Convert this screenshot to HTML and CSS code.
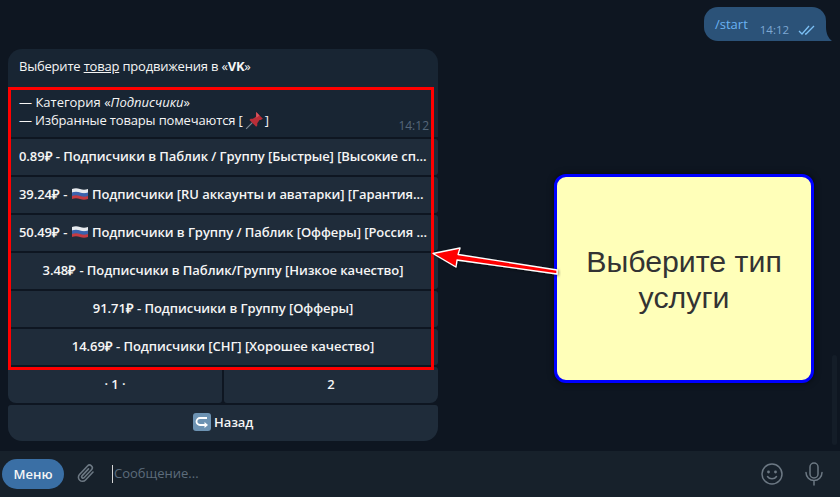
FILE: index.html
```html
<!DOCTYPE html>
<html lang="ru">
<head>
    <meta charset="UTF-8">
    <title>Telegram bot</title>
    <link rel="stylesheet" href="styles.css">
</head>
<body>
    <div class="app">
        <div class="chat">
            <div class="outgoing">
                <span class="cmd">/start</span>
                <span class="time">14:12</span>
                <svg class="checks" width="18" height="10" viewBox="0 0 18 10"><path d="M1 6l3 3 7-8M7 9l1 0 8-8" fill="none" stroke="#7cc0f5" stroke-width="1.300"/></svg>
                <svg class="tail" width="6" height="14" viewBox="0 0 6 14"><path d="M0 0C0 6 2 11 6 14H0Z" fill="#2b5278"/></svg>
            </div>
            <div class="incoming">
                <div class="message">
                    <p class="lead">Выберите <u>товар</u> продвижения в «<b>VK</b>»</p>
                    <p>— Категория «<i>Подписчики</i>»</p>
                    <p class="fav">— Избранные товары помечаются [<svg class="pin" width="19" height="19" viewBox="0 0 17 17"><path d="M1 16l6-6" stroke="#7d8a94" stroke-width="1"/><path d="M10 1l6 6-2 1-1 0-2 3 0 2-1 1-6-6 1-1 2 0 3-2 0-1z" fill="#b92e38"/><path d="M10 1l3 3-3 2z" fill="#d9555e"/></svg>]</p>
                    <span class="msg-time">14:12</span>
                </div>
                <div class="keyboard">
                    <div class="row"><button class="key key-left">0.89₽ - Подписчики в Паблик / Группу [Быстрые] [Высокие сп...</button></div>
                    <div class="row"><button class="key key-left">39.24₽ -
                        <svg class="flag" width="16" height="12" viewBox="0 0 16 12"><path d="M0 1q4-1.500 8 0t8 0v4q-4 1.500-8 0t-8 0z" fill="#e6eaee"/><path d="M0 4.500q4-1.500 8 0t8 0v4q-4 1.500-8 0t-8 0z" fill="#3a62ad"/><path d="M0 8q4-1.500 8 0t8 0v3q-4 1.500-8 0t-8 0z" fill="#c53b42"/></svg>
                        Подписчики [RU аккаунты и аватарки] [Гарантия...</button></div>
                    <div class="row"><button class="key key-left">50.49₽ -
                        <svg class="flag" width="16" height="12" viewBox="0 0 16 12"><path d="M0 1q4-1.500 8 0t8 0v4q-4 1.500-8 0t-8 0z" fill="#e6eaee"/><path d="M0 4.500q4-1.500 8 0t8 0v4q-4 1.500-8 0t-8 0z" fill="#3a62ad"/><path d="M0 8q4-1.500 8 0t8 0v3q-4 1.500-8 0t-8 0z" fill="#c53b42"/></svg>
                        Подписчики в Группу / Паблик [Офферы] [Россия ...</button></div>
                    <div class="row"><button class="key">3.48₽ - Подписчики в Паблик/Группу [Низкое качество]</button></div>
                    <div class="row"><button class="key">91.71₽ - Подписчики в Группу [Офферы]</button></div>
                    <div class="row"><button class="key">14.69₽ - Подписчики [СНГ] [Хорошее качество]</button></div>
                    <div class="row"><button class="key key-bl">· 1 ·</button><button class="key key-br">2</button></div>
                    <div class="row"><button class="key key-back">
                        <svg class="back" width="18" height="18" viewBox="0 0 18 18"><rect width="18" height="18" rx="3" fill="#6d93b3"/><path d="M14 5H7a3.500 3.500 0 0 0 0 7h5" fill="none" stroke="#fff" stroke-width="1.800"/><path d="M11.500 9l3.500 3-3.500 3z" fill="#fff"/></svg>
                        Назад</button></div>
                </div>
            </div>
            <div class="scrollbar"></div>
        </div>
        <div class="composer">
            <button class="menu">Меню</button>
            <svg class="clip" width="20" height="22" viewBox="0 0 20 22"><path d="M17 9l-7.500 8a4 4 0 0 1-6-5.500l8-8.500a2.700 2.700 0 0 1 4 3.700l-7.500 8a1.300 1.300 0 0 1-2-1.800l6.500-7" fill="none" stroke="#6c7883" stroke-width="1.600" stroke-linecap="round"/></svg>
            <span class="caret"></span>
            <span class="placeholder">Сообщение...</span>
            <svg class="smile" width="22" height="22" viewBox="0 0 22 22"><circle cx="11" cy="11" r="10" fill="none" stroke="#6c7883" stroke-width="1.500"/><circle cx="7.500" cy="9" r="1.400" fill="#6c7883"/><circle cx="14.500" cy="9" r="1.400" fill="#6c7883"/><path d="M6.500 13.500c2 3 7 3 9 0" fill="none" stroke="#6c7883" stroke-width="1.500" stroke-linecap="round"/></svg>
            <svg class="mic" width="18" height="24" viewBox="0 0 18 24"><rect x="5" y="1" width="8" height="15" rx="4" fill="none" stroke="#6c7883" stroke-width="1.500"/><path d="M1 10.500a8 8 0 0 0 16 0M9 18.500V23" fill="none" stroke="#6c7883" stroke-width="1.500" stroke-linecap="round"/></svg>
        </div>

        <div class="red-frame"></div>
        <div class="callout">Выберите тип услуги</div>
        <svg class="arrow" width="130" height="40" viewBox="0 0 130 40">
            <defs><filter id="glow" x="-10%" y="-30%" width="120%" height="160%"><feDropShadow dx="1" dy="1" stdDeviation="1.500" flood-color="#000" flood-opacity=".5"/></filter></defs>
            <path d="M2 8.500L29 3 27 9.500 126 25 126 29 26 15 25 22Z" fill="#ff0000" stroke="#fff" stroke-width="1.300" stroke-linejoin="round" filter="url(#glow)"/>
        </svg>
    </div>
</body>
</html>
```

FILE: styles.css
```css
* {
    box-sizing: border-box;
}
body {
    margin: 0;
    background-color: #0e1621;
    font-family: "Open Sans", sans-serif;
    font-size: 13px;
    color: #f5f5f5;
}
p {
    margin: 0;
}
button {
    border: 0;
    font-family: inherit;
}
.app {
    position: relative;
    display: flex;
    flex-direction: column;
    width: 840px;
    height: 497px;
    overflow: hidden;
}
.chat {
    position: relative;
    flex: 1;
    padding: 7px 10px 10px 8px;
    display: flex;
    flex-direction: column;
}

/* outgoing message */
.outgoing {
    position: relative;
    align-self: flex-end;
    display: flex;
    width: 122px;
    height: 34px;
    margin-right: 4px;
    padding: 0 0 0 11px;
    background-color: #2b5278;
    border-radius: 14px 14px 0 14px;
}
.cmd {
    margin-top: 9px;
    line-height: 16px;
    color: #6ab3f3;
}
.time {
    margin: 15px 0 0 12px;
    font-size: 11.500px;
    line-height: 16px;
    color: #7da8d3;
}
.checks {
    margin: 18px 0 0 9px;
}
.tail {
    position: absolute;
    right: -6px;
    bottom: 0;
}

/* incoming message and keyboard */
.incoming {
    width: 430px;
    margin-top: 8px;
}
.message {
    position: relative;
    height: 88px;
    padding: 8px 11px;
    background-color: #182533;
    border-radius: 14px 14px 0 0;
    line-height: 18px;
}
.lead {
    margin-bottom: 18px;
    letter-spacing: -.2px;
}
.fav {
    letter-spacing: -.15px;
}
.pin {
    vertical-align: -5px;
    margin: 0 1px 0 2px;
}
.msg-time {
    position: absolute;
    right: 9px;
    bottom: 3px;
    font-size: 12px;
    line-height: 16px;
    color: #56677a;
}
.keyboard {
    display: flex;
    flex-direction: column;
    gap: 2px;
    margin-top: 2px;
}
.row {
    display: flex;
    gap: 2px;
}
.key {
    flex: 1;
    height: 36px;
    padding: 0 11px 2px;
    background-color: #1f2c3a;
    color: #f5f5f5;
    font-size: 13px;
    font-weight: 600;
    letter-spacing: -.07px;
    border-radius: 3px;
    white-space: nowrap;
    overflow: hidden;
}
.key-left {
    text-align: left;
}
.flag {
    vertical-align: -1px;
    margin: 0 1px;
}
.key-bl {
    border-bottom-left-radius: 8px;
}
.key-br {
    border-bottom-right-radius: 8px;
}
.key-back {
    border-radius: 3px 3px 14px 14px;
}
.back {
    vertical-align: -4px;
}
.scrollbar {
    position: absolute;
    right: 3px;
    bottom: 6px;
    width: 5px;
    height: 90px;
    background-color: #141d28;
    border-radius: 3px;
}

/* bottom bar */
.composer {
    display: flex;
    align-items: center;
    height: 46px;
    padding: 0 17px 0 2px;
    background-color: #17212b;
}
.menu {
    width: 62px;
    height: 30px;
    background-color: #3a6fa5;
    color: #f5f5f5;
    font-size: 13px;
    font-weight: 600;
    border-radius: 15px;
}
.clip {
    margin-left: 12px;
}
.caret {
    width: 1px;
    height: 18px;
    margin-left: 16px;
    background-color: #d6d6d6;
}
.placeholder {
    flex: 1;
    margin-left: 1px;
    padding-bottom: 2px;
    color: #5d6c7b;
}
.mic {
    margin-left: 22px;
}

/* annotations drawn over the screenshot */
.red-frame {
    position: absolute;
    left: 8px;
    top: 87px;
    width: 426px;
    height: 283px;
    border: 3px solid #ff0000;
}
.callout {
    position: absolute;
    left: 554px;
    top: 174px;
    width: 260px;
    height: 209px;
    display: flex;
    align-items: center;
    justify-content: center;
    padding: 2px 20px 0;
    text-align: center;
    background-color: #ffffb9;
    border: 3px solid #0000ff;
    border-radius: 12px;
    box-shadow: 0 0 6px rgba(0, 0, 0, .6);
    font-family: "Liberation Sans", sans-serif;
    font-size: 30.300px;
    line-height: 36px;
    color: #333333;
}
.arrow {
    position: absolute;
    left: 431px;
    top: 245px;
}
```
